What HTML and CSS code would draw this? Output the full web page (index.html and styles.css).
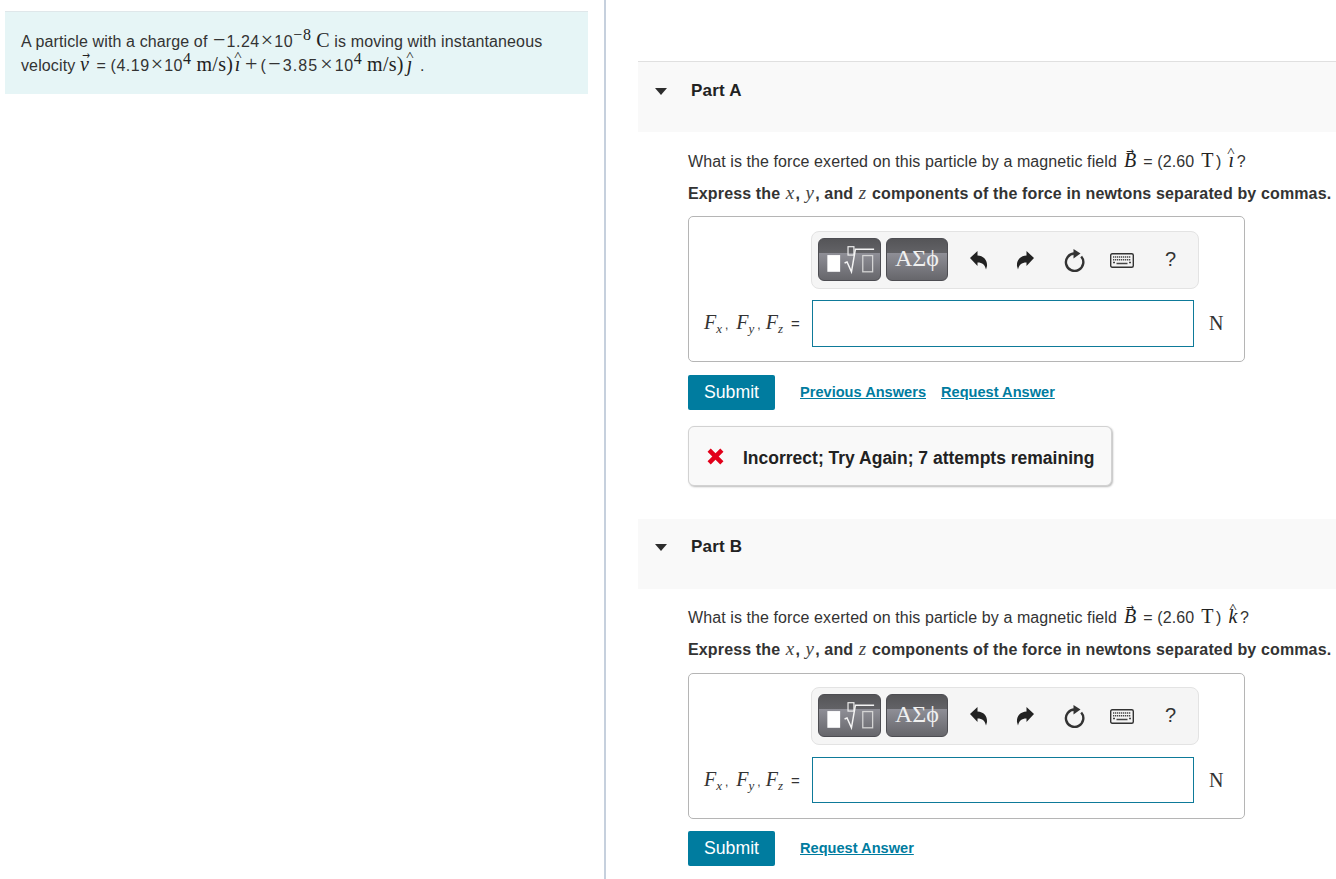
FILE: index.html
```html
<!DOCTYPE html>
<html lang="en">
<head>
<meta charset="utf-8">
<title>Magnetic force on a particle</title>
<link rel="stylesheet" href="styles.css">
</head>
<body>
<svg class="defs" width="0" height="0" aria-hidden="true">
  <symbol id="i-undo" viewBox="0 0 20 20"><path d="M1 8 8.500 1v4.500c6 .2 10 4.500 9.500 10.500l-1 3.500c-1-4.500-3.500-7-8.500-7V16z"/></symbol>
  <symbol id="i-redo" viewBox="0 0 20 20"><path d="M19 8 11.500 1v4.500c-6 .2-10 4.500-9.500 10.500l1 3.500c1-4.500 3.500-7 8.500-7V16z"/></symbol>
  <symbol id="i-reload" viewBox="0 0 22 24"><path d="M17.200 8.500a8.700 8.700 0 1 1-6.700-3" fill="none" stroke="#333" stroke-width="2.400"/><path d="M9.500 1v9.500L16.500 5.500z" fill="#333"/></symbol>
  <symbol id="i-keys" viewBox="0 0 24 15"><rect x=".7" y=".7" width="22.600" height="13.600" rx="1.500" fill="#f4f4f4" stroke="#333" stroke-width="1.400"/><path d="M3 4h18M3 6.700h18" stroke="#444" stroke-width="1.500" stroke-dasharray="1.300 .7"/><path d="M3 9.500h2m14 0h2M6.500 10.500h11" stroke="#444" stroke-width="1.500"/></symbol>
  <symbol id="i-tmpl" viewBox="0 0 63 43"><rect x="9.500" y="17" width="13" height="17" fill="#fff"/><rect x="30.500" y="8.500" width="6" height="8.500" fill="none" stroke="#eee" stroke-width="1.200"/><path d="M27 25l2.500-1 4.500 10 4-23h19" fill="none" stroke="#f4f4f4" stroke-width="1.500"/><rect x="45.500" y="17.500" width="10" height="16.500" fill="none" stroke="#d4d4d4" stroke-width="1.300"/></symbol>
</svg>
<main class="page">
  <aside class="left">
    <div class="intro">
      <p>A particle with a charge of <span class="op">−</span><span class="n">1.24</span><span class="op">×</span><span class="n">10</span><sup class="m">−8</sup> <span class="m big">C</span> is moving with instantaneous<br>
      velocity <span class="acc"><i class="m big glv">v</i><span class="arrow">→</span></span> = <span class="n">(4.19</span><span class="op">×</span><span class="n">10</span><sup class="m">4</sup> <span class="m big sp">m/s)</span><span class="acc"><i class="m big gl">ı</i><span class="hat">^</span></span> <span class="op tight">+</span> <span class="n">(</span><span class="op wide">−</span><span class="n nw">3.85</span><span class="op wide">×</span><span class="n">10</span><sup class="m">4</sup> <span class="m big sp">m/s)</span><span class="acc"><i class="m big glj">ȷ</i><span class="hat">^</span></span> .</p>
    </div>
  </aside>
  <section class="right">
    <article class="part part-a">
      <header class="part-head"><span class="caret"></span><h2>Part A</h2></header>
      <div class="part-body">
        <p class="q">What is the force exerted on this particle by a magnetic field <span class="acc"><i class="m big gl">B</i><span class="arrow">→</span></span> = (2.60 <span class="m big gl">T</span>) <span class="acc"><i class="m big gl">ı</i><span class="hat">^</span></span>?</p>
        <p class="ex">Express the <i class="m nb">x</i>, <i class="m nb">y</i>, and <i class="m nb">z</i> components of the force in newtons separated by commas.</p>
        <div class="answer">
          <div class="toolbar">
            <button class="tb tb-t" aria-label="Templates"><svg class="tmpl"><use href="#i-tmpl"/></svg></button>
            <button class="tb tb-g">ΑΣϕ</button>
            <svg class="ic ic-undo"><use href="#i-undo"/></svg>
            <svg class="ic ic-redo"><use href="#i-redo"/></svg>
            <svg class="ic ic-reload"><use href="#i-reload"/></svg>
            <svg class="ic ic-keys"><use href="#i-keys"/></svg>
            <span class="help">?</span>
          </div>
          <div class="row">
            <span class="lbl"><i class="m">F<sub>x</sub></i><span class="c">,</span><i class="m">F<sub>y</sub></i><span class="c">,</span><i class="m">F<sub>z</sub></i><span class="eq">=</span></span>
            <div class="field"></div>
            <span class="unit m">N</span>
          </div>
        </div>
        <div class="actions">
          <button class="submit">Submit</button>
          <a class="link first" href="#">Previous Answers</a>
          <a class="link" href="#">Request Answer</a>
        </div>
        <div class="feedback">
          <svg class="x" viewBox="0 0 16 16"><path d="M.5 3.500 3.500.5 8 5 12.500.5l3 3L11 8l4.500 4.500-3 3L8 11l-4.500 4.500-3-3L5 8z"/></svg>
          <span>Incorrect; Try Again; 7 attempts remaining</span>
        </div>
      </div>
    </article>
    <article class="part part-b">
      <header class="part-head"><span class="caret"></span><h2>Part B</h2></header>
      <div class="part-body">
        <p class="q">What is the force exerted on this particle by a magnetic field <span class="acc"><i class="m big gl">B</i><span class="arrow">→</span></span> = (2.60 <span class="m big gl">T</span>) <span class="acc"><i class="m big gl">k</i><span class="hat">^</span></span>?</p>
        <p class="ex">Express the <i class="m nb">x</i>, <i class="m nb">y</i>, and <i class="m nb">z</i> components of the force in newtons separated by commas.</p>
        <div class="answer">
          <div class="toolbar">
            <button class="tb tb-t" aria-label="Templates"><svg class="tmpl"><use href="#i-tmpl"/></svg></button>
            <button class="tb tb-g">ΑΣϕ</button>
            <svg class="ic ic-undo"><use href="#i-undo"/></svg>
            <svg class="ic ic-redo"><use href="#i-redo"/></svg>
            <svg class="ic ic-reload"><use href="#i-reload"/></svg>
            <svg class="ic ic-keys"><use href="#i-keys"/></svg>
            <span class="help">?</span>
          </div>
          <div class="row">
            <span class="lbl"><i class="m">F<sub>x</sub></i><span class="c">,</span><i class="m">F<sub>y</sub></i><span class="c">,</span><i class="m">F<sub>z</sub></i><span class="eq">=</span></span>
            <div class="field"></div>
            <span class="unit m">N</span>
          </div>
        </div>
        <div class="actions">
          <button class="submit">Submit</button>
          <a class="link first" href="#">Request Answer</a>
        </div>
      </div>
    </article>
  </section>
</main>
</body>
</html>
```
FILE: styles.css
```css
* { box-sizing: border-box; }
html, body { margin: 0; height: 100%; overflow: hidden; }
body { font-family: "Liberation Sans", Arial, sans-serif; font-size: 16px; color: #333; background: #fff; }
p, h2 { margin: 0; }
.defs { position: absolute; }
.page { display: flex; height: 879px; }
.left { width: 606px; flex: none; border-right: 2px solid #c6d0dd; padding: 11px 16px 0 5px; }
.intro { height: 83px; background: #e6f5f6; border-top: 1px solid #dfe7ea; padding: 18px 16px 0; line-height: 24px; letter-spacing: .12px; }
.intro p { white-space: nowrap; }
.m { font-family: "Liberation Serif", "Times New Roman", serif; }
.big { font-size: 20px; line-height: 1; color: #222; }
.sp { letter-spacing: .3px; }
.gl { padding: 0 1.500px; }
.q .gl { padding: 0 2.500px; }
.glv { padding: 0 3px 0 0; }
.glj { padding: 0 3px; }
.n { letter-spacing: .55px; }
.nw { letter-spacing: 1.100px; }
.op { font: 22px/0 "Liberation Serif", serif; letter-spacing: 0; padding: 0 1px; }
.op.wide { padding: 0 2px; }
.op.tight { margin: 0 -2.500px; }
.nb { font-weight: 400; font-size: 19px; line-height: 1; color: #444; padding: 0 1px; }
sup.m { font-size: 16px; line-height: 0; vertical-align: 7px; color: #222; letter-spacing: .8px; }
.acc { position: relative; }
.hat { position: absolute; left: 50%; transform: translateX(-50%) scaleX(1.300); top: -7px; font: 12px/1 "Liberation Serif", serif; color: #222; }
.arrow { position: absolute; left: 50%; transform: translateX(-50%) scaleX(.85); top: -7px; font: 11px/1 "DejaVu Sans", sans-serif; color: #222; }
.right { flex: 1; padding: 61px 0 0 32px; min-width: 0; }
.part-a { height: 457px; }
.part-head { height: 71px; background: #f9f9f9; border-top: 1px solid #e0e0e0; display: flex; align-items: center; padding: 0 0 12px 17px; }
.part-b .part-head { border-top-color: #fff; padding-bottom: 14px; }
.caret { width: 0; height: 0; border: 6.500px solid transparent; border-top: 7px solid #2d2d2d; border-bottom: 0; }
h2 { font-size: 17px; font-weight: 700; color: #222; margin-left: 24px; letter-spacing: .2px; }
.part-body { padding: 17px 0 0 50px; white-space: nowrap; }
.part-b .part-body { padding-top: 16px; }
.q { line-height: 24px; height: 33px; padding-top: 1px; letter-spacing: .09px; }
.ex { font-weight: 700; line-height: 24px; height: 24px; letter-spacing: .14px; }
.answer { width: 557px; height: 146px; margin-top: 10px; border: 1px solid #b5b5b5; border-radius: 5px; padding: 14px 0 0 15px; }
.part-b .answer { margin-top: 11px; padding-top: 13px; }
.toolbar { width: 388px; height: 58px; margin-left: 107px; background: #f5f5f5; border: 1px solid #e3e3e3; border-radius: 8px; display: flex; align-items: center; padding-left: 6px; }
.tb { height: 43px; margin-top: -1px; border: 1px solid #4d4d52; border-radius: 6px; padding: 0; background: linear-gradient(#555558 0, #626266 34%, #8e8e96 35%, #66666b 100%); color: #f0f0f0; margin-right: 5px; }
.tb-t { width: 63px; display: flex; }
.tb-g { width: 62px; font: 24px/1 "Liberation Serif", serif; padding-bottom: 3px; }
.tmpl { width: 63px; height: 43px; margin-left: -1px; margin-top: -1px; }
.ic { flex: none; fill: #222; }
.ic-undo { width: 20px; height: 20px; margin-left: 16px; margin-top: -1px; }
.ic-redo { width: 20px; height: 20px; margin-left: 26px; margin-top: -1px; }
.ic-reload { width: 22px; height: 24px; margin-left: 29px; }
.ic-keys { width: 24px; height: 15px; margin-left: 24px; }
.help { margin-left: 31px; font-size: 20px; color: #333; margin-top: -2px; }
.row { display: flex; align-items: center; height: 47px; margin-top: 11px; }
.part-b .row { height: 46px; margin-top: 12px; }
.lbl { width: 108px; font-size: 14px; white-space: nowrap; margin-top: -2px; }
.lbl .m { font-size: 20px; color: #333; }
.lbl sub { font-size: 13px; line-height: 0; vertical-align: -4px; }
.lbl .c { font-size: 12px; margin: 0 8px 0 3px; }
.lbl .c ~ .c { margin-right: 5px; }
.lbl .eq { font-size: 15px; margin-left: 8px; }
.field { width: 382px; height: 100%; background: #fff; border: 1px solid #0e7a99; }
.unit { margin-left: 15px; font-size: 20px; color: #333; }
.actions { display: flex; align-items: center; height: 35px; margin-top: 13px; }
.part-b .actions { margin-top: 12px; }
.submit { width: 87px; height: 35px; background: #007c9f; color: #fff; border: 0; border-radius: 2px; font: 17.700px "Liberation Sans", sans-serif; padding: 0; }
.link { color: #007c9f; font-size: 14.600px; font-weight: 700; margin-left: 15px; text-decoration: underline; padding-bottom: 2px; }
.link.first { margin-left: 25px; }
.feedback { width: 424px; height: 60px; margin-top: 16px; background: #f9f9f9; border: 1px solid #d2d2d2; border-radius: 6px; box-shadow: 1px 1px 2px #bbb; display: flex; align-items: center; padding-left: 18px; font-weight: 700; font-size: 17.500px; color: #222; }
.feedback span { padding-top: 5px; }
.x { width: 17px; height: 17px; fill: #e2001a; margin-right: 19px; flex: none; }
```
